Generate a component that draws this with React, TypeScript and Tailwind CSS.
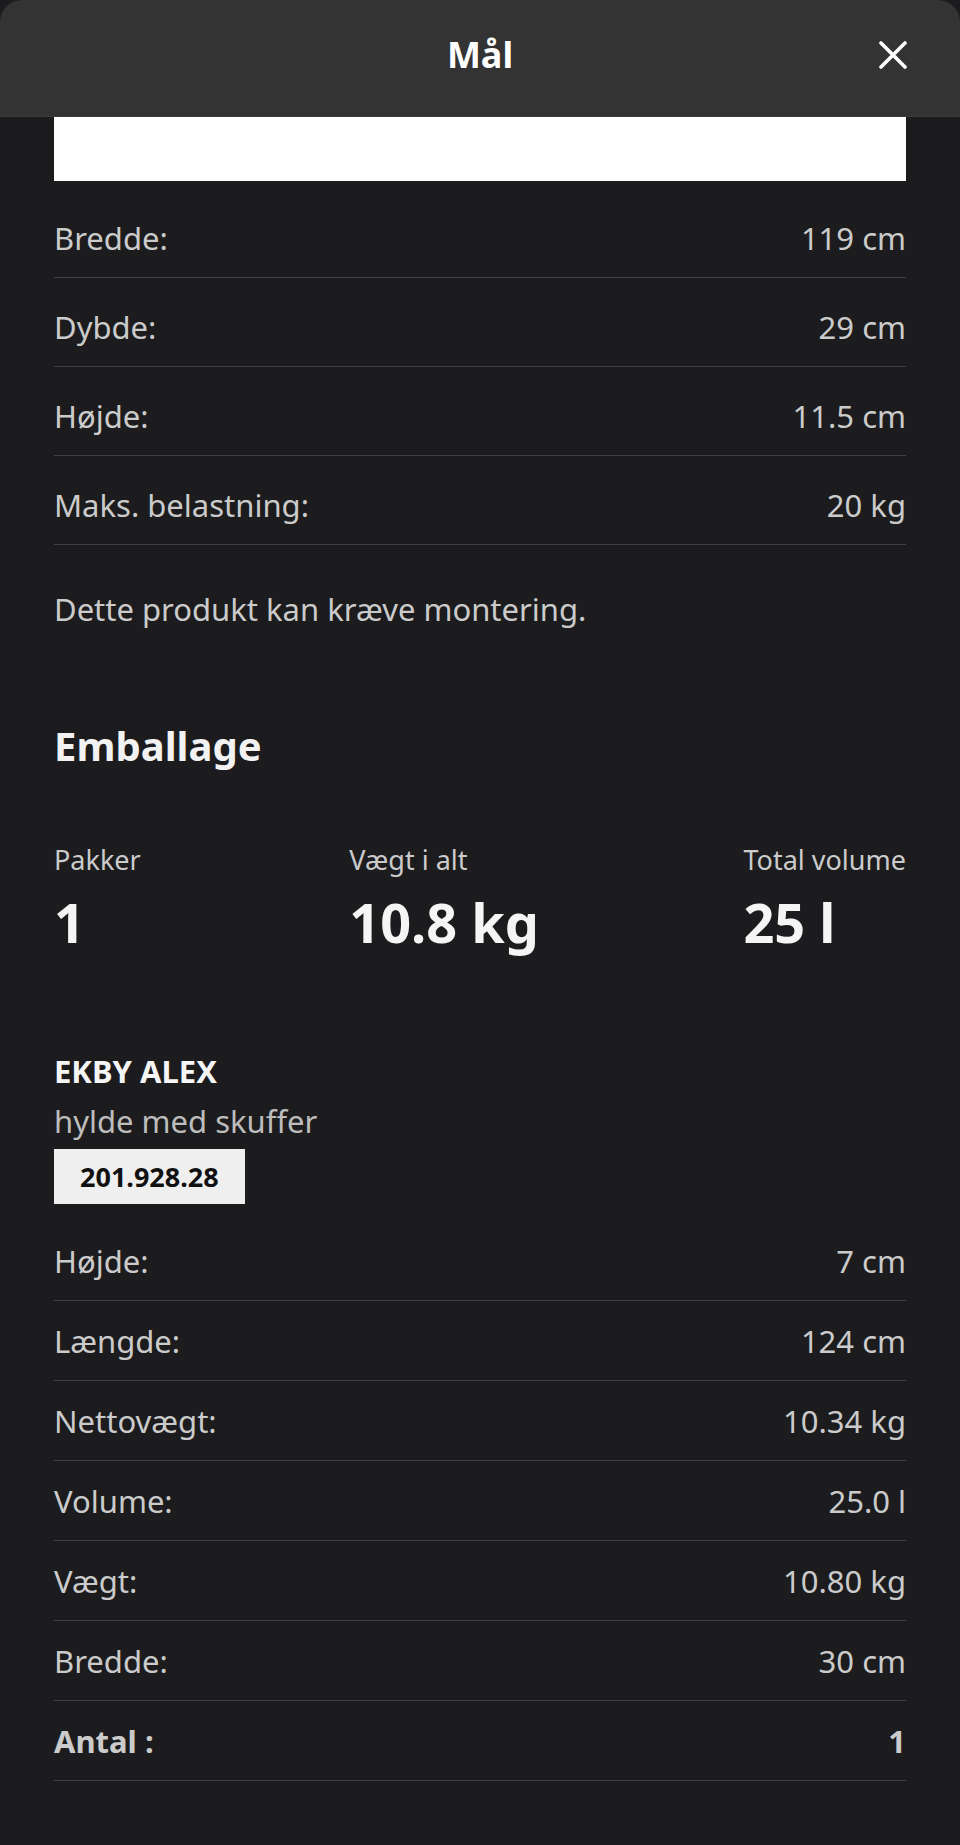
const productRows = [
  { label: "Bredde:", value: "119 cm" },
  { label: "Dybde:", value: "29 cm" },
  { label: "Højde:", value: "11.5 cm" },
  { label: "Maks. belastning:", value: "20 kg" },
];

const packageRows = [
  { label: "Højde:", value: "7 cm" },
  { label: "Længde:", value: "124 cm" },
  { label: "Nettovægt:", value: "10.34 kg" },
  { label: "Volume:", value: "25.0 l" },
  { label: "Vægt:", value: "10.80 kg" },
  { label: "Bredde:", value: "30 cm" },
  { label: "Antal :", value: "1", bold: true },
];

export default function App() {
  return (
    <div
      className="min-h-[1845px] w-[960px] bg-[#1c1c1e] text-[#cbcbcb]"
      style={{ fontFamily: '"Noto Sans", "Open Sans", sans-serif' }}
    >
      {/* header */}
      <div className="grid h-[117px] grid-cols-[1fr_auto_1fr] items-start rounded-t-[22px] border-b border-[#3a3a3a] bg-[#333333] px-[53px] pt-[34px]">
        <div />
        <h1 className="text-[36px] font-bold leading-[42px] text-white">Mål</h1>
        <button className="mt-[7px] justify-self-end" aria-label="Luk">
          <svg width="28" height="28" viewBox="0 0 28 28">
            <path d="M2 2 L26 26 M26 2 L2 26" stroke="#ffffff" strokeWidth="3.6" strokeLinecap="round" />
          </svg>
        </button>
      </div>

      <div className="px-[54px]">
        <div className="mb-[8px] h-[64px] bg-white" />

        {productRows.map((row) => (
          <div
            key={row.label}
            className="flex justify-between border-b border-[#404042] pt-[27px] pb-[17px] text-[31px] leading-[44px]"
          >
            <span>{row.label}</span>
            <span>{row.value}</span>
          </div>
        ))}

        <p className="mt-[42px] text-[31px] leading-[44px]">Dette produkt kan kræve montering.</p>

        <h2 className="mt-[89px] text-[40px] font-bold leading-[52px] text-[#f2f2f2]">Emballage</h2>

        <div className="mt-[70px] flex justify-between">
          <div>
            <div className="text-[27px] leading-[36px]">Pakker</div>
            <div className="mt-[12px] text-[54px] font-bold leading-[64px] text-[#f5f5f5]">1</div>
          </div>
          <div className="ml-[4px]">
            <div className="text-[27px] leading-[36px]">Vægt i alt</div>
            <div className="mt-[12px] text-[54px] font-bold leading-[64px] text-[#f5f5f5]">10.8 kg</div>
          </div>
          <div>
            <div className="text-[27px] leading-[36px]">Total volume</div>
            <div className="mt-[12px] text-[54px] font-bold leading-[64px] text-[#f5f5f5]">25 l</div>
          </div>
        </div>

        <div className="mt-[97px] text-[31px] font-bold leading-[40px] text-[#f5f5f5]">EKBY ALEX</div>
        <div className="mt-[8px] text-[31px] leading-[44px] text-[#bdbdbd]">hylde med skuffer</div>
        <div className="mt-[6px] mb-[17px] inline-block h-[55px] bg-[#efefef] px-[26px] text-[27px] font-bold leading-[55px] text-[#111111]">
          201.928.28
        </div>

        {packageRows.map((row) => (
          <div
            key={row.label}
            className={`flex justify-between border-b border-[#404042] pt-[18px] pb-[17px] text-[31px] leading-[44px] ${
              row.bold ? "font-bold" : ""
            }`}
          >
            <span>{row.label}</span>
            <span>{row.value}</span>
          </div>
        ))}
      </div>
    </div>
  );
}
